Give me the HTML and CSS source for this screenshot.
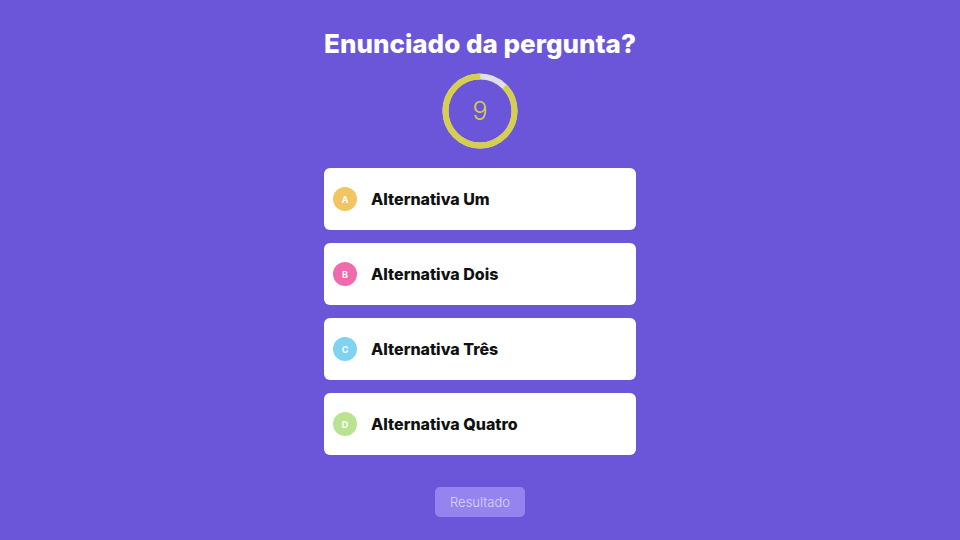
FILE: index.html
```html
<!DOCTYPE html>
<html lang="pt">
<head>
<meta charset="utf-8">
<title>Quiz</title>
<link rel="stylesheet" href="styles.css">
</head>
<body>
<main class="quiz">
  <h1 class="question">Enunciado da pergunta?</h1>
  <div class="timer">
    <svg class="ring" viewBox="0 0 76 76" width="76" height="76">
      <circle cx="38" cy="38" r="34.5" fill="none" stroke="#e1dee6" stroke-width="6"/>
      <circle cx="38" cy="38" r="34.5" fill="none" stroke="#d6cf4b" stroke-width="6"
        stroke-dasharray="189.7 216.8" transform="rotate(-45 38 38)"/>
    </svg>
    <span class="count">9</span>
  </div>
  <ul class="options">
    <li class="option"><span class="badge badge-a">A</span><span class="label">Alternativa Um</span></li>
    <li class="option"><span class="badge badge-b">B</span><span class="label">Alternativa Dois</span></li>
    <li class="option"><span class="badge badge-c">C</span><span class="label">Alternativa Três</span></li>
    <li class="option"><span class="badge badge-d">D</span><span class="label">Alternativa Quatro</span></li>
  </ul>
  <button class="result">Resultado</button>
</main>
</body>
</html>
```
FILE: styles.css
```css
* { box-sizing: border-box; }
html, body { margin: 0; padding: 0; }
body {
  background: #6b55d9;
  font-family: Inter, "Open Sans", sans-serif;
  width: 960px;
  height: 540px;
  overflow: hidden;
}
.quiz {
  display: flex;
  flex-direction: column;
  align-items: center;
  padding-top: 27px;
}
.question {
  margin: 0;
  color: #fff;
  font-size: 26px;
  font-weight: 800;
  line-height: 34px;
}
.timer {
  position: relative;
  width: 76px;
  height: 76px;
  margin-top: 12px;
  display: flex;
  align-items: center;
  justify-content: center;
}
.ring { position: absolute; left: 0; top: 0; }
.count {
  position: relative;
  color: #d6cf4b;
  font-size: 25px;
  font-weight: 300;
}
.options {
  list-style: none;
  margin: 19px 0 0;
  padding: 0;
  display: flex;
  flex-direction: column;
  gap: 13px;
}
.option {
  width: 312px;
  height: 62px;
  background: #fff;
  border-radius: 6px;
  display: flex;
  align-items: center;
  padding-left: 9px;
}
.badge {
  width: 24px;
  height: 24px;
  border-radius: 50%;
  color: #fff;
  font-size: 9px;
  font-weight: 700;
  display: flex;
  align-items: center;
  justify-content: center;
}
.badge-a { background: #f2c563; }
.badge-b { background: #f06aae; }
.badge-c { background: #80d2f1; }
.badge-d { background: #b9e38f; }
.label {
  margin-left: 14px;
  font-size: 16px;
  font-weight: 800;
  color: #111;
}
.result {
  margin-top: 32px;
  width: 90px;
  height: 30px;
  border: none;
  border-radius: 5px;
  background: #9584f0;
  color: #dcd5fb;
  font-family: inherit;
  font-size: 13px;
  font-weight: 300;
}
```
